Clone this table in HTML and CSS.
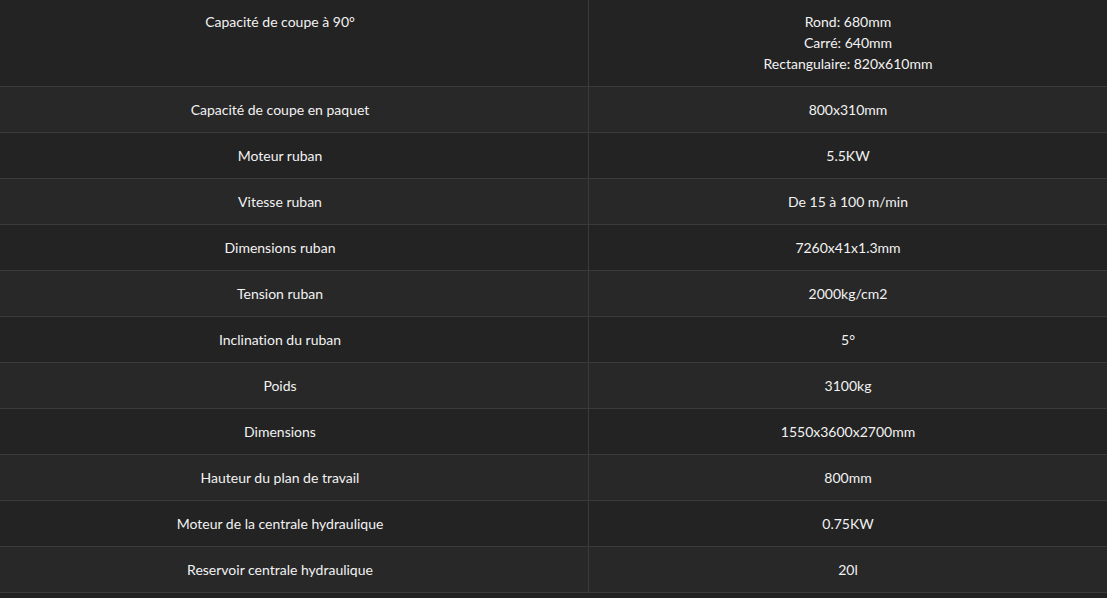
FILE: index.html
```html
<!DOCTYPE html>
<html lang="fr">
<head>
<meta charset="utf-8">
<link rel="stylesheet" href="styles.css">
</head>
<body>
<table class="specs">
  <tbody>
    <tr class="tall"><td class="label">Capacité de coupe à 90°</td><td class="value">Rond: 680mm<br>Carré: 640mm<br>Rectangulaire: 820x610mm</td></tr>
    <tr><td class="label">Capacité de coupe en paquet</td><td class="value">800x310mm</td></tr>
    <tr><td class="label">Moteur ruban</td><td class="value">5.5KW</td></tr>
    <tr><td class="label">Vitesse ruban</td><td class="value">De 15 à 100 m/min</td></tr>
    <tr><td class="label">Dimensions ruban</td><td class="value">7260x41x1.3mm</td></tr>
    <tr><td class="label">Tension ruban</td><td class="value">2000kg/cm2</td></tr>
    <tr><td class="label">Inclination du ruban</td><td class="value">5°</td></tr>
    <tr><td class="label">Poids</td><td class="value">3100kg</td></tr>
    <tr><td class="label">Dimensions</td><td class="value">1550x3600x2700mm</td></tr>
    <tr><td class="label">Hauteur du plan de travail</td><td class="value">800mm</td></tr>
    <tr><td class="label">Moteur de la centrale hydraulique</td><td class="value">0.75KW</td></tr>
    <tr><td class="label">Reservoir centrale hydraulique</td><td class="value">20l</td></tr>
  </tbody>
</table>
</body>
</html>
```

FILE: styles.css
```css
html, body {
  margin: 0;
  padding: 0;
  background: #222222;
}
body {
  font-family: Lato, "Open Sans", sans-serif;
  font-size: 14px;
  font-variant-ligatures: none;
  color: #f2f2f2;
}
.specs {
  width: 1107px;
  border-collapse: collapse;
  table-layout: fixed;
  margin-top: -1px;
}
.specs td {
  text-align: center;
  vertical-align: top;
  line-height: 21px;
  padding: 12px 10px;
  border-bottom: 1px solid #3b3b3b;
}
.specs tr:nth-child(odd) td {
  background: #232323;
}
.specs tr:nth-child(even) td {
  background: #282828;
}
.specs td.label {
  width: 540px;
  padding-right: 38px;
  border-right: 1px solid #3b3b3b;
}
```
